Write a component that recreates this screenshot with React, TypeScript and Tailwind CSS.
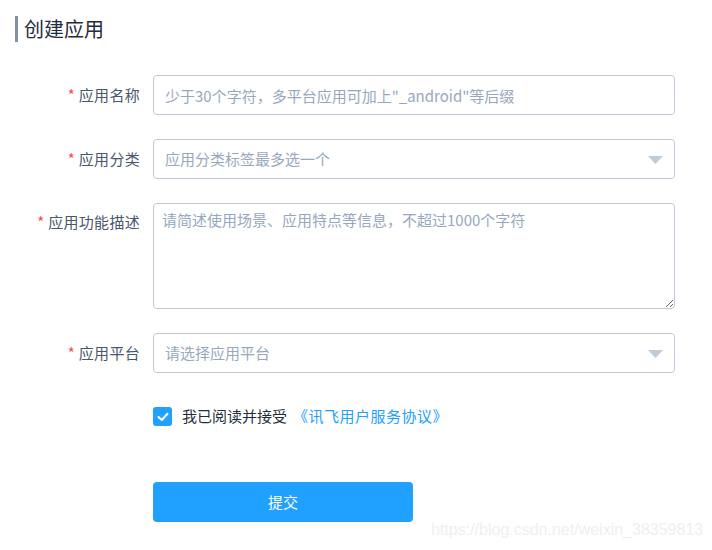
import React from "react";

const font = { fontFamily: '"Noto Sans CJK SC", "Noto Sans", sans-serif' };

function Label({ text, top }: { text: string; top?: boolean }) {
  return (
    <div
      className={`w-[153px] shrink-0 pr-[13px] flex justify-end text-[15px] text-[#48576a] ${top ? "items-start pt-[8px]" : "items-center"}`}
    >
      <span className="text-[#ff4949] mr-[4px]">*</span>
      <span className="tracking-[0.3px]">{text}</span>
    </div>
  );
}

function Caret() {
  return (
    <svg width="15" height="8" viewBox="0 0 15 8" className="absolute right-[11px] top-[16px]">
      <polygon points="0,0 15,0 7.5,8" fill="#bfcbd9" />
    </svg>
  );
}

export default function App() {
  return (
    <div className="w-[712px] h-[550px] bg-white relative overflow-hidden" style={font}>
      <div className="pt-[16px] pl-[15px]">
        <div className="border-l-[3px] border-[#8391a5] pl-[6px] h-[26px] flex items-center text-[20px] text-[#1f2d3d] leading-none">
          创建应用
        </div>
      </div>

      <div className="mt-[33px] flex flex-col w-[675px]">
        <div className="flex h-[40px]">
          <Label text="应用名称" />
          <input
            className="flex-1 h-[40px] border border-[#bfcbd9] rounded-[4px] px-[11px] text-[15px] text-[#1f2d3d] placeholder:text-[#97a8be] outline-none"
            placeholder={'少于30个字符，多平台应用可加上"_android"等后缀'}
            style={font}
          />
        </div>

        <div className="flex h-[40px] mt-[24px]">
          <Label text="应用分类" />
          <div className="flex-1 relative h-[40px] border border-[#bfcbd9] rounded-[4px] px-[11px] flex items-center text-[15px] text-[#97a8be]">
            应用分类标签最多选一个
            <Caret />
          </div>
        </div>

        <div className="flex h-[106px] mt-[24px]">
          <Label text="应用功能描述" top />
          <textarea
            className="flex-1 h-[106px] border border-[#bfcbd9] rounded-[4px] px-[8px] py-[5px] text-[15px] leading-[22px] text-[#1f2d3d] placeholder:text-[#97a8be] outline-none"
            placeholder="请简述使用场景、应用特点等信息，不超过1000个字符"
            style={font}
          />
        </div>

        <div className="flex h-[40px] mt-[24px]">
          <Label text="应用平台" />
          <div className="flex-1 relative h-[40px] border border-[#bfcbd9] rounded-[4px] px-[11px] flex items-center text-[15px] text-[#97a8be]">
            请选择应用平台
            <Caret />
          </div>
        </div>

        <div className="flex items-center mt-[34px] pl-[153px] h-[19px]">
          <div className="w-[19px] h-[19px] rounded-[3px] bg-[#20a0ff] flex items-center justify-center">
            <svg width="12" height="10" viewBox="0 0 12 10">
              <polyline points="1.5,5 4.8,8 10.5,1.8" fill="none" stroke="white" strokeWidth="2" strokeLinecap="round" strokeLinejoin="round" />
            </svg>
          </div>
          <span className="ml-[10px] text-[15px] text-[#1f2d3d]">我已阅读并接受</span>
          <span className="ml-[6px] text-[15px] text-[#20a0ff] tracking-[0.5px]">《讯飞用户服务协议》</span>
        </div>

        <div className="pl-[153px] mt-[56px]">
          <div className="w-[260px] h-[40px] rounded-[4px] bg-[#20a0ff] flex items-center justify-center text-white text-[15px]">
            提交
          </div>
        </div>
      </div>

      <div
        className="absolute left-[431px] top-[518px] text-[16px] text-[#efefef]"
        style={{ fontFamily: '"Liberation Sans", Arial, sans-serif' }}
      >
        https://blog.csdn.net/weixin_38359813
      </div>
    </div>
  );
}
